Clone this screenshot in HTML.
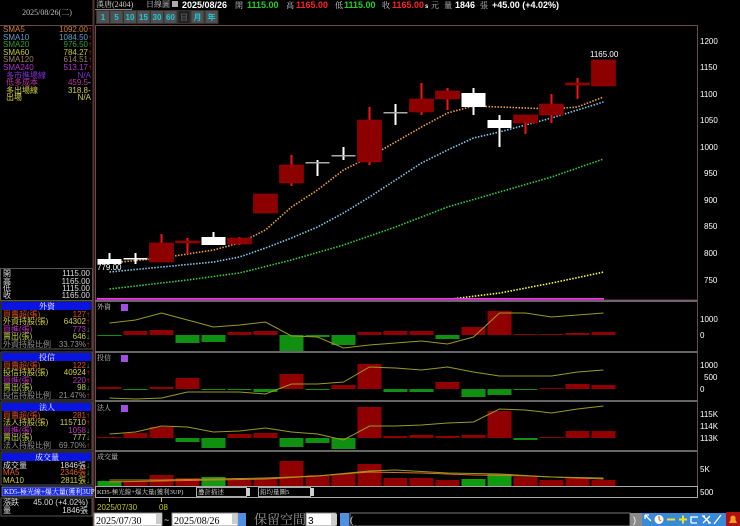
<!DOCTYPE html>
<html><head><meta charset="utf-8"><style>
html,body{margin:0;padding:0;background:#000;width:740px;height:526px;overflow:hidden}
svg{display:block}
text{font-family:"Liberation Sans","Noto Sans CJK TC",sans-serif}
.c{font-family:"Liberation Serif","Noto Serif CJK SC",serif;font-size:8px}
.r{font-size:8px;fill:#fff;font-family:"Liberation Sans",sans-serif}
</style></head><body>
<svg width="740" height="526" viewBox="0 0 740 526" xmlns="http://www.w3.org/2000/svg">
<rect width="740" height="526" fill="#000"/>
<!-- left panel -->
<line x1="93.5" y1="0" x2="93.5" y2="526" stroke="#5a3030" stroke-width="2"/>
<line x1="0" y1="25.5" x2="93" y2="25.5" stroke="#6a4a3a"/>
<text x="47" y="15" class="c" fill="#c0c0c0" text-anchor="middle">2025/08/26(二)</text>
<g class="c">
<text x="3" y="32" fill="#d08030">SMA5</text><text x="88" y="32" fill="#d08030" text-anchor="end">1092.00</text>
<text x="3" y="40" fill="#60a0c8">SMA10</text><text x="88" y="40" fill="#60a0c8" text-anchor="end">1084.50</text>
<text x="3" y="47" fill="#30a030">SMA20</text><text x="88" y="47" fill="#30a030" text-anchor="end">976.50</text>
<text x="3" y="55" fill="#c8c820">SMA60</text><text x="88" y="55" fill="#c8c820" text-anchor="end">784.27</text>
<text x="3" y="62" fill="#a08060">SMA120</text><text x="88" y="62" fill="#a08060" text-anchor="end">614.51</text>
<text x="3" y="70" fill="#b030d0">SMA240</text><text x="88" y="70" fill="#b030d0" text-anchor="end">513.17</text>
<text x="6" y="78" fill="#8030d0">多市進場線</text><text x="91" y="78" fill="#8030d0" text-anchor="end">N/A</text>
<text x="6" y="85" fill="#c030a0">低多成本</text><text x="88" y="85" fill="#c030a0" text-anchor="end">459.5</text>
<text x="6" y="93" fill="#d0d040">多出場線</text><text x="88" y="93" fill="#d0d040" text-anchor="end">318.8</text>
<text x="6" y="100" fill="#d0d040">出場</text><text x="91" y="100" fill="#d0d040" text-anchor="end">N/A</text>
</g>
<g fill="#ff2020" class="c"><text x="88" y="32">↑</text><text x="88" y="40">↑</text><text x="88" y="47">↑</text><text x="88" y="55">↑</text><text x="88" y="62">↑</text><text x="88" y="70">↑</text></g>
<g fill="#ddd" class="c"><text x="88" y="85">-</text><text x="88" y="93">-</text></g>
<!-- OHLC -->
<rect x="0.5" y="268.5" width="92" height="32" fill="none" stroke="#555"/>
<g class="c" fill="#ddd">
<text x="3" y="276">開</text><text x="90" y="276" text-anchor="end">1115.00</text>
<text x="3" y="284">高</text><text x="90" y="284" text-anchor="end">1165.00</text>
<text x="3" y="291">低</text><text x="90" y="291" text-anchor="end">1115.00</text>
<text x="3" y="298">收</text><text x="90" y="298" text-anchor="end">1165.00</text>
</g>
<!-- 外資 -->
<rect x="1" y="301" width="91" height="48" fill="none" stroke="#555"/>
<rect x="2" y="302" width="89" height="8" fill="#0a14e0"/>
<text x="47" y="309" class="c" fill="#fff" text-anchor="middle">外資</text>
<g class="c">
<text x="3" y="317" fill="#e05020">買賣超(張)</text><text x="86" y="317" fill="#e05020" text-anchor="end">127</text><text x="86" y="317" fill="#ff2020">↑</text>
<text x="3" y="324" fill="#d0d040">外資持股(張)</text><text x="86" y="324" fill="#d0d040" text-anchor="end">64302</text><text x="86" y="324" fill="#ff2020">↑</text>
<text x="3" y="332" fill="#c030c0">買進(張)</text><text x="86" y="332" fill="#c030c0" text-anchor="end">773</text><text x="86" y="332" fill="#20c020">↓</text>
<text x="3" y="339" fill="#c0d040">賣出(張)</text><text x="86" y="339" fill="#c0d040" text-anchor="end">646</text><text x="86" y="339" fill="#20c020">↓</text>
<text x="3" y="347" fill="#909090">外資持股比例</text><text x="86" y="347" fill="#909090" text-anchor="end">33.73%</text><text x="86" y="347" fill="#ff2020">↑</text>
</g>
<!-- 投信 -->
<rect x="1" y="352" width="91" height="48" fill="none" stroke="#555"/>
<rect x="2" y="353" width="89" height="8" fill="#0a14e0"/>
<text x="47" y="360" class="c" fill="#fff" text-anchor="middle">投信</text>
<g class="c">
<text x="3" y="368" fill="#e05020">買賣超(張)</text><text x="86" y="368" fill="#e05020" text-anchor="end">122</text><text x="86" y="368" fill="#20c020">↓</text>
<text x="3" y="375" fill="#d0d040">投信持股(張)</text><text x="86" y="375" fill="#d0d040" text-anchor="end">40924</text><text x="86" y="375" fill="#ff2020">↑</text>
<text x="3" y="383" fill="#c030c0">買進(張)</text><text x="86" y="383" fill="#c030c0" text-anchor="end">220</text><text x="86" y="383" fill="#ff2020">↑</text>
<text x="3" y="390" fill="#c0d040">賣出(張)</text><text x="86" y="390" fill="#c0d040" text-anchor="end">98</text><text x="86" y="390" fill="#20c020">↓</text>
<text x="3" y="398" fill="#909090">投信持股比例</text><text x="86" y="398" fill="#909090" text-anchor="end">21.47%</text><text x="86" y="398" fill="#ff2020">↑</text>
</g>
<!-- 法人 -->
<rect x="1" y="402" width="91" height="48" fill="none" stroke="#555"/>
<rect x="2" y="403" width="89" height="8" fill="#0a14e0"/>
<text x="47" y="410" class="c" fill="#fff" text-anchor="middle">法人</text>
<g class="c">
<text x="3" y="418" fill="#e05020">買賣超(張)</text><text x="86" y="418" fill="#e05020" text-anchor="end">281</text><text x="86" y="418" fill="#ff2020">↑</text>
<text x="3" y="425" fill="#d0d040">法人持股(張)</text><text x="86" y="425" fill="#d0d040" text-anchor="end">115710</text><text x="86" y="425" fill="#ff2020">↑</text>
<text x="3" y="433" fill="#c030c0">買進(張)</text><text x="86" y="433" fill="#c030c0" text-anchor="end">1058</text><text x="86" y="433" fill="#20c020">↓</text>
<text x="3" y="440" fill="#c0d040">賣出(張)</text><text x="86" y="440" fill="#c0d040" text-anchor="end">777</text><text x="86" y="440" fill="#20c020">↓</text>
<text x="3" y="448" fill="#909090">法人持股比例</text><text x="86" y="448" fill="#909090" text-anchor="end">69.70%</text><text x="86" y="448" fill="#ff2020">↑</text>
</g>
<!-- 成交量 -->
<rect x="1" y="452" width="91" height="33" fill="none" stroke="#555"/>
<rect x="2" y="453" width="89" height="8" fill="#0a14e0"/>
<text x="47" y="460" class="c" fill="#fff" text-anchor="middle">成交量</text>
<g class="c">
<text x="3" y="468" fill="#ddd">成交量</text><text x="86" y="468" fill="#ddd" text-anchor="end">1846張</text><text x="86" y="468" fill="#20c020">↓</text>
<text x="3" y="475" fill="#e06020">MA5</text><text x="86" y="475" fill="#e06020" text-anchor="end">2346張</text><text x="86" y="475" fill="#20c020">↓</text>
<text x="3" y="483" fill="#d0d040">MA10</text><text x="86" y="483" fill="#d0d040" text-anchor="end">2811張</text><text x="86" y="483" fill="#20c020">↓</text>
</g>
<rect x="2" y="487" width="90" height="9" fill="#1a2ae0" stroke="#aaa" stroke-width="0.6"/>
<text x="4" y="494" class="c" fill="#fff" style="font-size:7px">KD5-極光線+爆大量(獲利3UP)</text>
<rect x="1" y="498" width="91" height="18" fill="none" stroke="#555"/>
<g class="c" fill="#ddd"><text x="3" y="505">漲跌</text><text x="88" y="505" text-anchor="end">45.00 (+4.02%)</text>
<text x="3" y="513">量</text><text x="88" y="513" text-anchor="end">1846張</text></g>

<!-- top header -->
<line x1="95" y1="9.5" x2="132" y2="9.5" stroke="#888"/>
<text x="96" y="7" class="c" fill="#ccc">漢唐(2404)</text>
<text x="146" y="7" class="c" fill="#ccc">日線圖</text>
<rect x="172" y="1" width="6" height="6" fill="#aaa"/>
<g style="font-size:9px;font-weight:bold;font-family:'Liberation Sans',sans-serif">
<text x="182" y="8" fill="#fff">2025/08/26</text>
<text x="235" y="8" class="c" fill="#ccc" style="font-weight:normal">開</text>
<text x="247" y="8" fill="#20d020">1115.00</text>
<text x="286" y="8" class="c" fill="#ccc" style="font-weight:normal">高</text>
<text x="296" y="8" fill="#ff2020">1165.00</text>
<text x="335" y="8" class="c" fill="#ccc" style="font-weight:normal">低</text>
<text x="344" y="8" fill="#20d020">1115.00</text>
<text x="382" y="8" class="c" fill="#ccc" style="font-weight:normal">收</text>
<text x="392" y="8" fill="#ff2020">1165.00</text>
<text x="425" y="8" fill="#fff" style="font-size:6px">s</text>
<text x="431" y="8" class="c" fill="#ccc" style="font-weight:normal">元</text>
<text x="444" y="8" class="c" fill="#ccc" style="font-weight:normal">量</text>
<text x="455" y="8" fill="#fff">1846</text>
<text x="480" y="8" class="c" fill="#ccc" style="font-weight:normal">張</text>
<text x="492" y="8" fill="#fff">+45.00 (+4.02%)</text>
</g>
<g font-size="8" fill="#20c8d8" text-anchor="middle" style="font-family:'Liberation Serif',serif;font-weight:bold">
<rect x="96" y="10" width="122" height="14" fill="#3a3a3a"/>
<rect x="96.5" y="10.5" width="13" height="13" fill="#505050" stroke="#333"/><text x="103" y="20">1</text>
<rect x="110" y="10.5" width="13" height="13" fill="#505050" stroke="#333"/><text x="116.5" y="20">5</text>
<rect x="123.5" y="10.5" width="13" height="13" fill="#505050" stroke="#333"/><text x="130" y="20">10</text>
<rect x="137" y="10.5" width="13" height="13" fill="#505050" stroke="#333"/><text x="143.5" y="20">15</text>
<rect x="150.5" y="10.5" width="13" height="13" fill="#505050" stroke="#333"/><text x="157" y="20">30</text>
<rect x="164" y="10.5" width="13" height="13" fill="#505050" stroke="#333"/><text x="170.5" y="20">60</text>
<rect x="178" y="10.5" width="12" height="13" fill="#202020" stroke="#333"/><text x="184" y="20" fill="#555">日</text>
<rect x="191" y="10.5" width="13" height="13" fill="#505050" stroke="#333"/><text x="197.5" y="20">月</text>
<rect x="205" y="10.5" width="13" height="13" fill="#505050" stroke="#333"/><text x="211.5" y="20">年</text>
</g>

<!-- main chart frame -->
<line x1="95.5" y1="25" x2="95.5" y2="486" stroke="#6a4a4a"/>
<line x1="95" y1="25.5" x2="697" y2="25.5" stroke="#6a4a4a"/>
<line x1="697.5" y1="25" x2="697.5" y2="498" stroke="#6a4a4a"/>
<g class="r">
<text x="700" y="44">1200</text><text x="700" y="70">1150</text><text x="700" y="97">1100</text><text x="700" y="123">1050</text><text x="700" y="150">1000</text><text x="704" y="176">950</text><text x="704" y="203">900</text><text x="704" y="229">850</text><text x="704" y="256">800</text><text x="704" y="283">750</text>
</g>
<text x="590" y="57" class="r">1165.00</text>
<text x="97" y="270" class="r">779.00</text>

<!-- MAs -->
<g fill="none" stroke-width="1.6" stroke-dasharray="1.5 1.5">
<polyline stroke="#ffff40" points="451,299 500,293 552,283 604,272"/>
<polyline stroke="#30d040" points="109.5,289 187.5,280 239.5,273 291.5,260 343.5,245 395.5,227 447.5,207 499.5,192 551.5,177 603.5,159"/>
<polyline stroke="#80c8f0" points="109.5,272 161.5,267 213.5,262 239.5,257 265.5,248 291.5,238 317.5,227 343.5,213 369.5,197 395.5,180 421.5,163 447.5,150 473.5,138 499.5,132 525.5,125 551.5,118 577.5,110 603.5,102"/>
<polyline stroke="#f0a040" points="109.5,263 161.5,258 213.5,250 239.5,243 265.5,230 291.5,207 317.5,190 343.5,170 369.5,157 395.5,142 421.5,127 447.5,113 473.5,106 499.5,107 525.5,108 551.5,109 577.5,107 603.5,97"/>
</g>
<line x1="97" y1="299" x2="604" y2="299" stroke="#ff30ff" stroke-width="2"/>

<!-- candles -->
<g stroke-width="2">
<g stroke="#fff">
<line x1="109.5" y1="253" x2="109.5" y2="264"/>
<line x1="135.5" y1="253" x2="135.5" y2="264"/>
<line x1="213.5" y1="232" x2="213.5" y2="245"/>
<line x1="317.5" y1="160" x2="317.5" y2="176"/>
<line x1="343.5" y1="147" x2="343.5" y2="160"/>
<line x1="395.5" y1="104" x2="395.5" y2="125"/>
<line x1="473.5" y1="88" x2="473.5" y2="115"/>
<line x1="499.5" y1="115" x2="499.5" y2="147"/>
</g>
<g stroke="#ff1010">
<line x1="161.5" y1="234" x2="161.5" y2="262"/>
<line x1="187.5" y1="238" x2="187.5" y2="254"/>
<line x1="239.5" y1="237" x2="239.5" y2="245"/>
<line x1="291.5" y1="155" x2="291.5" y2="186"/>
<line x1="369.5" y1="107" x2="369.5" y2="165"/>
<line x1="421.5" y1="83" x2="421.5" y2="115"/>
<line x1="447.5" y1="88" x2="447.5" y2="110"/>
<line x1="525.5" y1="115" x2="525.5" y2="134"/>
<line x1="551.5" y1="94" x2="551.5" y2="123"/>
<line x1="577.5" y1="78" x2="577.5" y2="99"/>
</g>
</g>
<g fill="#fff">
<rect x="97.5" y="259" width="24" height="5"/>
<rect x="123.5" y="258" width="24" height="1.5"/>
<rect x="201.5" y="237" width="24" height="8"/>
<rect x="305.5" y="162" width="24" height="1.5" fill="#aaa"/>
<rect x="331.5" y="155" width="24" height="1.5" fill="#aaa"/>
<rect x="383.5" y="112" width="24" height="1.5" fill="#aaa"/>
<rect x="461.5" y="93" width="24" height="14"/>
<rect x="487.5" y="120" width="24" height="8"/>
</g>
<g fill="#8c0000" stroke="#a00000" stroke-width="0.6">
<rect x="149.5" y="243" width="24" height="19"/>
<rect x="175.5" y="241" width="24" height="2"/>
<rect x="227.5" y="238" width="24" height="6"/>
<rect x="253.5" y="194" width="24" height="19"/>
<rect x="279.5" y="165" width="24" height="18"/>
<rect x="357.5" y="120" width="24" height="42"/>
<rect x="409.5" y="99" width="24" height="13"/>
<rect x="435.5" y="91" width="24" height="8"/>
<rect x="513.5" y="115" width="24" height="8"/>
<rect x="539.5" y="104" width="24" height="11"/>
<rect x="565.5" y="83" width="24" height="2"/>
<rect x="591.5" y="60" width="24" height="26"/>
</g>

<!-- panel dividers -->
<g stroke="#888" stroke-width="1.5">
<line x1="95" y1="301" x2="697" y2="301"/>
<line x1="95" y1="352" x2="697" y2="352"/>
<line x1="95" y1="401" x2="697" y2="401"/>
<line x1="95" y1="451" x2="697" y2="451"/>
</g>
<line x1="95" y1="300" x2="697" y2="300" stroke="#6a3a5a"/>

<!-- panel 1 外資 -->
<text x="97" y="309" class="c" fill="#ccc" style="font-size:7px">外資</text>
<rect x="121" y="304" width="7" height="7" fill="#a050e0"/>
<g class="r"><text x="700" y="322">1000</text><text x="700" y="338">0</text></g>
<g fill="#900000">
<rect x="123.5" y="331" width="24" height="4"/><rect x="149.5" y="330" width="24" height="5"/>
<rect x="227.5" y="332" width="24" height="3"/><rect x="253.5" y="331" width="24" height="4"/>
<rect x="357.5" y="332" width="24" height="3"/><rect x="383.5" y="331" width="24" height="4"/><rect x="409.5" y="331" width="24" height="4"/>
<rect x="461.5" y="327" width="24" height="8"/><rect x="487.5" y="311" width="24" height="24"/>
<rect x="513.5" y="334" width="24" height="1"/><rect x="539.5" y="334" width="24" height="1"/><rect x="565.5" y="333" width="24" height="2"/><rect x="591.5" y="332" width="24" height="3"/>
</g>
<g fill="#109010">
<rect x="97.5" y="335" width="24" height="1"/>
<rect x="175.5" y="335" width="24" height="8"/><rect x="201.5" y="335" width="24" height="7"/>
<rect x="279.5" y="335" width="24" height="16"/><rect x="305.5" y="335" width="24" height="2"/><rect x="331.5" y="335" width="24" height="10"/>
<rect x="435.5" y="335" width="24" height="4"/>
</g>
<polyline fill="none" stroke="#9a9a20" points="109.5,323 135.5,320 161.5,313 187.5,320 213.5,327 239.5,325 265.5,322 291.5,336 317.5,337 343.5,348 369.5,345 395.5,343 421.5,341 447.5,344 473.5,337 499.5,313 525.5,313 551.5,317 577.5,315 603.5,313"/>

<!-- panel 2 投信 -->
<text x="97" y="360" class="c" fill="#ccc" style="font-size:7px">投信</text>
<rect x="121" y="355" width="7" height="7" fill="#a050e0"/>
<g class="r"><text x="700" y="368">1000</text><text x="704" y="380">500</text><text x="700" y="392">0</text></g>
<g fill="#900000">
<rect x="97.5" y="387" width="24" height="2"/><rect x="149.5" y="387" width="24" height="2"/><rect x="175.5" y="378" width="24" height="11"/>
<rect x="279.5" y="374" width="24" height="15"/><rect x="331.5" y="385" width="24" height="4"/><rect x="357.5" y="364" width="24" height="25"/>
<rect x="435.5" y="382" width="24" height="7"/><rect x="539.5" y="388" width="24" height="1"/><rect x="565.5" y="384" width="24" height="5"/><rect x="591.5" y="385" width="24" height="4"/>
</g>
<g fill="#109010">
<rect x="123.5" y="389" width="24" height="1"/><rect x="201.5" y="389" width="24" height="1"/><rect x="227.5" y="389" width="24" height="1"/><rect x="253.5" y="389" width="24" height="3"/>
<rect x="305.5" y="389" width="24" height="1"/><rect x="383.5" y="389" width="24" height="3"/><rect x="409.5" y="389" width="24" height="3"/>
<rect x="461.5" y="389" width="24" height="8"/><rect x="487.5" y="389" width="24" height="6"/><rect x="513.5" y="389" width="24" height="1"/>
</g>
<polyline fill="none" stroke="#9a9a20" points="109.5,398 135.5,399 161.5,398 187.5,392 213.5,392 239.5,392 265.5,394 291.5,384 317.5,384 343.5,382 369.5,367 395.5,368 421.5,370 447.5,367 473.5,372 499.5,376 525.5,376 551.5,376 577.5,372 603.5,370"/>

<!-- panel 3 法人 -->
<text x="97" y="410" class="c" fill="#ccc" style="font-size:7px">法人</text>
<rect x="121" y="405" width="7" height="7" fill="#a050e0"/>
<g class="r"><text x="700" y="417">115K</text><text x="700" y="429">114K</text><text x="700" y="441">113K</text></g>
<g fill="#900000">
<rect x="97.5" y="437" width="24" height="1"/><rect x="123.5" y="433" width="24" height="5"/><rect x="149.5" y="427" width="24" height="11"/>
<rect x="227.5" y="434" width="24" height="4"/><rect x="253.5" y="433" width="24" height="5"/>
<rect x="357.5" y="407" width="24" height="31"/><rect x="383.5" y="436" width="24" height="2"/><rect x="409.5" y="435" width="24" height="3"/><rect x="435.5" y="436" width="24" height="2"/><rect x="461.5" y="435" width="24" height="3"/>
<rect x="487.5" y="411" width="24" height="27"/><rect x="539.5" y="437" width="24" height="1"/><rect x="565.5" y="431" width="24" height="7"/><rect x="591.5" y="431" width="24" height="7"/>
</g>
<g fill="#109010">
<rect x="175.5" y="438" width="24" height="4"/><rect x="201.5" y="438" width="24" height="10"/>
<rect x="279.5" y="438" width="24" height="9"/><rect x="305.5" y="438" width="24" height="5"/><rect x="331.5" y="438" width="24" height="11"/>
<rect x="513.5" y="438" width="24" height="2"/>
</g>
<polyline fill="none" stroke="#9a9a20" points="109.5,434 135.5,432 161.5,426 187.5,427 213.5,432 239.5,431 265.5,428 291.5,432 317.5,434 343.5,440 369.5,426 395.5,426 421.5,425 447.5,423 473.5,422 499.5,409 525.5,410 551.5,413 577.5,409 603.5,406"/>

<!-- panel 4 volume -->
<text x="97" y="459" class="c" fill="#ccc" style="font-size:7px">成交量</text>
<text x="700" y="472" class="r">5K</text>
<g fill="#900000">
<rect x="123.5" y="481" width="24" height="5"/><rect x="149.5" y="475" width="24" height="11"/><rect x="175.5" y="478" width="24" height="8"/>
<rect x="227.5" y="480" width="24" height="6"/><rect x="253.5" y="479" width="24" height="7"/><rect x="279.5" y="461" width="24" height="25"/>
<rect x="305.5" y="475" width="24" height="11"/><rect x="331.5" y="474" width="24" height="12"/><rect x="357.5" y="464" width="24" height="22"/>
<rect x="383.5" y="478" width="24" height="8"/><rect x="409.5" y="478" width="24" height="8"/><rect x="435.5" y="480" width="24" height="6"/>
<rect x="513.5" y="477" width="24" height="9"/><rect x="539.5" y="480" width="24" height="6"/><rect x="565.5" y="478" width="24" height="8"/><rect x="591.5" y="480" width="24" height="6"/>
</g>
<g fill="#109a10">
<rect x="97.5" y="481" width="24" height="5"/><rect x="201.5" y="477" width="24" height="9"/>
<rect x="461.5" y="479" width="24" height="7"/><rect x="487.5" y="474" width="24" height="12"/>
</g>
<polyline fill="none" stroke="#e07020" points="109.5,482 161.5,481 213.5,480 265.5,479 317.5,476 369.5,472 421.5,473 473.5,475 525.5,476 577.5,478 603.5,479"/>
<polyline fill="none" stroke="#9a9a20" points="109.5,480 161.5,480 213.5,479 265.5,478 317.5,476 369.5,471 395.5,470 447.5,473 499.5,474 551.5,477 603.5,478"/>

<!-- toolbar row -->
<rect x="95.5" y="486.5" width="602" height="11" fill="#000" stroke="#aaa"/>
<text x="97" y="494" class="c" fill="#ddd" style="font-size:6.5px">KD5-極光線+爆大量(獲利3UP)</text>
<rect x="196.5" y="487.5" width="50" height="9" fill="#000" stroke="#aaa"/>
<text x="198" y="494" class="c" fill="#ddd" style="font-size:6.5px">疊計描述</text>
<rect x="246" y="488" width="4" height="8" fill="#ccc"/>
<rect x="258.5" y="487.5" width="52" height="9" fill="#000" stroke="#aaa"/>
<text x="260" y="494" class="c" fill="#ddd" style="font-size:6.5px">鉛均量圖5</text>
<rect x="310" y="488" width="4" height="8" fill="#ccc"/>
<text x="700" y="495" class="r">500</text>

<!-- date axis -->
<line x1="109.5" y1="498" x2="109.5" y2="502" stroke="#c8c820"/>
<line x1="161.5" y1="498" x2="161.5" y2="502" stroke="#c8c820"/>
<text x="97" y="510" fill="#c8c820" style="font-size:8px">2025/07/30</text>
<text x="159" y="510" fill="#c8c820" style="font-size:8px">08</text>

<!-- bottom bar -->
<rect x="94" y="512" width="646" height="14" fill="#000"/>
<rect x="94" y="513" width="68" height="13" fill="#fff" stroke="#888"/>
<text x="96" y="524" fill="#000" style="font-size:10px;font-family:'Liberation Serif',serif">2025/07/30</text>
<rect x="156" y="514" width="5" height="10" fill="#ccc"/>
<text x="164" y="523" fill="#ddd" style="font-size:9px">~</text>
<rect x="172" y="513" width="66" height="13" fill="#fff" stroke="#888"/>
<text x="174" y="524" fill="#000" style="font-size:10px;font-family:'Liberation Serif',serif">2025/08/26</text>
<rect x="232" y="514" width="5" height="10" fill="#ccc"/>
<rect x="238" y="513" width="8" height="13" fill="#5090e0"/>
<text x="254" y="524" fill="#999" style="font-size:13px;font-family:'Liberation Serif','Noto Serif CJK SC',serif">保留空間</text>
<rect x="306" y="513" width="30" height="13" fill="#fff" stroke="#888"/>
<text x="308" y="524" fill="#000" style="font-size:10px">3</text>
<rect x="331" y="514" width="6" height="11" fill="#ccc"/>
<rect x="340" y="513" width="9" height="13" fill="#5090e0"/>
<rect x="350" y="513" width="280" height="13" fill="#000" stroke="#777"/>
<text x="350" y="523" fill="#ddd" style="font-size:9px">(</text>
<rect x="630" y="513" width="12" height="13" fill="#8a8a8a"/>
<text x="633" y="523" fill="#fff" style="font-size:9px">)</text>
<rect x="642" y="513" width="84" height="13" fill="#3a8ad8"/>
<g stroke="#fff" stroke-width="1.3" fill="none">
<path d="M645 515 L651 521 M645 515 L649 515 M645 515 L645 519"/>
<circle cx="659" cy="519.5" r="4.5" fill="#fff" stroke="none"/>
<path d="M659 519.5 L659 516 M659 519.5 L661 521" stroke="#e07020"/>
<path d="M667 519.5 L675 519.5" stroke="#f0e020" stroke-width="2"/>
<path d="M679 519.5 L687 519.5 M683 515.5 L683 523.5" stroke="#f0e020" stroke-width="2"/>
<path d="M691 523 L691 517 L698 517 M691 523 L697 523"/>
<path d="M703 516 L710 523 M710 516 L703 523 M702 516 h3 M708 523 h3"/>
<path d="M714 524 L721 515"/>
</g>
<rect x="726" y="512" width="14" height="14" fill="#b01010"/>
<path d="M729 523 L737 523 L735.5 520 L735.5 517 Q733 514 730.5 517 L730.5 520 Z" fill="#f0a020"/>
</svg>
</body></html>
